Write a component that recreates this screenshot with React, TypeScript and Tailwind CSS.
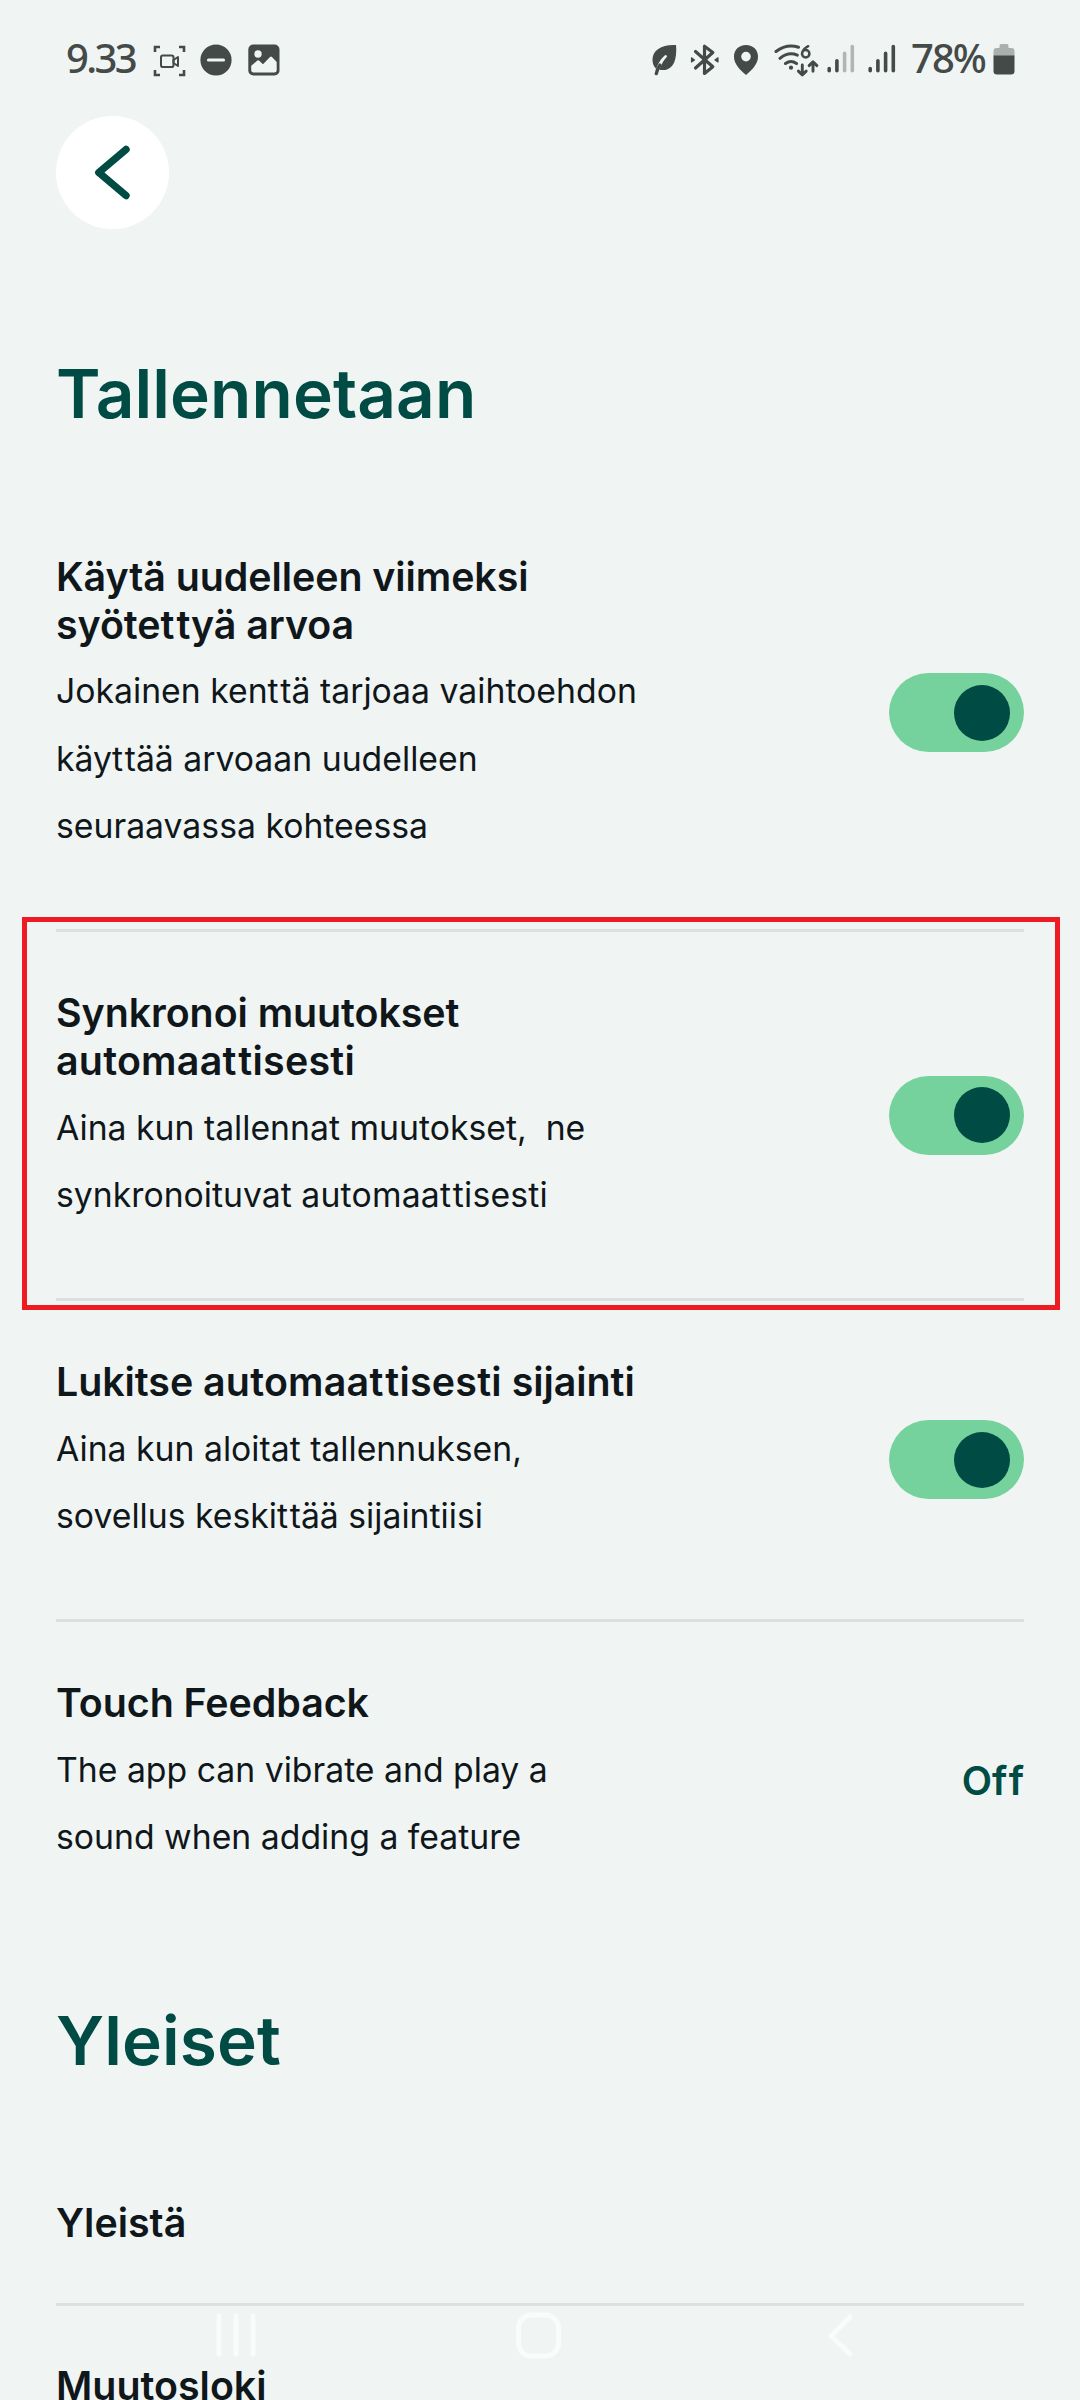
import { Fragment, type ReactNode } from "react";

const INK = "#444a48";

function Signal({ dim }: { dim: boolean }) {
  const faint = dim ? "#b1b6b5" : INK;
  return (
    <svg width="28" height="30" viewBox="0 0 28 30" strokeWidth="3.6" strokeLinecap="round">
      <path d="M2.2 24.5v2.300M9.900 16.700v10.100" stroke={INK} />
      <path d="M17.600 9.200v17.600M25.300 2.600v24.200" stroke={faint} />
    </svg>
  );
}

function StatusBar() {
  return (
    <div className="flex h-[116px] items-start justify-between pt-[44px] font-['Noto_Sans','Open_Sans',sans-serif] text-[40px] leading-[28px] font-medium text-[#444a48]">
      <div className="flex">
        <span className="ml-[66px] w-[87px] tracking-[-2.600px]">9.33</span>
        <svg className="mt-px" width="33" height="32" viewBox="0 0 33 32" fill="none" stroke={INK}>
          <path d="M2 7V2h5M26 2h5v5M31 25v5h-5M7 30H2v-5" strokeWidth="2.600" />
          <rect x="8" y="10.500" width="12.500" height="11.500" rx="1.800" strokeWidth="2" />
          <path d="M20.500 15l4.500-3v9l-4.500-3z" strokeWidth="2" strokeLinejoin="round" />
        </svg>
        <svg className="ml-[14px]" width="32" height="32" viewBox="0 0 32 32">
          <circle cx="16" cy="16" r="15.600" fill={INK} />
          <path d="M8.500 16h15" stroke="#f0f5f4" strokeWidth="3.200" strokeLinecap="round" />
        </svg>
        <svg className="ml-4" width="32" height="32" viewBox="0 0 32 32">
          <rect x="0.300" y="0.500" width="31.200" height="31" rx="5" fill={INK} />
          <circle cx="10" cy="10" r="3.700" fill="#f0f5f4" />
          <path d="M3.200 21.800L9.400 16.600Q10.300 16 11.200 16.800L15 20.200L22 13Q23 12.100 24 13L28.700 18V26.200Q28.700 28.600 26.200 28.600H5.700Q3.200 28.600 3.200 26.200Z" fill="#f0f5f4" />
        </svg>
      </div>
      <div className="flex">
        <svg width="26" height="32" viewBox="0 0 26 32">
          <path d="M25 1C11 0.200 1.500 6 1.500 15.500C1.500 20.500 3.500 23 5.500 25.200Q8 16.500 16.400 11Q11 18.200 8.300 25.800C19 27.800 26.700 20.500 25 1Z" fill={INK} />
          <path d="M14.500 12.500Q8 18 5 30" fill="none" stroke="#f0f5f4" strokeWidth="2.600" strokeLinecap="round" />
          <path d="M9 21Q6 25.500 5.300 29.700" fill="none" stroke={INK} strokeWidth="3.300" strokeLinecap="round" />
        </svg>
        <svg className="ml-[13px]" width="30" height="32" viewBox="0 0 30 32" fill="none" stroke={INK} strokeWidth="3.200" strokeLinejoin="round" strokeLinecap="round">
          <path d="M5.500 7.500L22.800 22.800L14.500 29.400V2.200L22.800 8.500L5.500 24" />
          <path d="M1.500 13.800V18l3-2.100zM28 13.800V18l-3-2.100z" fill={INK} strokeWidth="1.200" />
        </svg>
        <svg className="ml-[13px]" width="26" height="32" viewBox="0 0 26 32">
          <path fillRule="evenodd" d="M13 1C5.800 1 1 6 1 12.800C1 20 7 26 13 31C19 26 25 20 25 12.800C25 6 20.200 1 13 1ZM13 7.800A4.800 4.800 0 1 1 13 17.400A4.800 4.800 0 1 1 13 7.800Z" fill={INK} />
        </svg>
        <svg className="ml-[15px]" width="45" height="34" viewBox="0 0 45 34" fill="none" stroke={INK} strokeWidth="3" strokeLinecap="round" strokeLinejoin="round">
          <path d="M2 7.500Q12.500-0.500 24.500 3.200M6 14.300Q14.500 7.400 23.300 11.200M11.500 19.500Q17 15.500 22.500 19.500" />
          <circle cx="17" cy="23.700" r="2.100" fill={INK} stroke="none" />
          <path d="M34.200 2.200Q28.200 5.500 28 10.200M28 9.800a3.700 3.700 0 1 1 7.400 0a3.700 3.700 0 1 1-7.400 0" strokeWidth="2.500" />
          <path d="M28.300 21v9.700M24.400 27.100l3.900 3.800l3.900-3.800M39 27.300V18.200M35.100 21.600l3.900-3.800l3.900 3.800" strokeWidth="2.900" />
        </svg>
        <div className="ml-[8px] flex gap-[13px]">
          <Signal dim />
          <Signal dim={false} />
        </div>
        <span className="ml-[15px] w-[82px] tracking-[-2px]">78%</span>
        <svg className="mr-[65px]" width="22" height="32" viewBox="0 0 22 32">
          <path d="M6.500 1.500Q6.500 0 8 0h6q1.500 0 1.500 1.500V4h3q3 0 3 3v5H.5V7q0-3 3-3h3z" fill="#abb0af" />
          <path d="M.5 11.500h21V27q0 3.500-3.500 3.500H4Q.5 30.500.5 27z" fill={INK} />
        </svg>
      </div>
    </div>
  );
}

function Toggle() {
  return (
    <div className="flex h-[79px] w-[135px] items-center justify-end rounded-full bg-[#76d29c] pr-[14.500px]">
      <div className="size-[56px] rounded-full bg-[#004b43]" />
    </div>
  );
}

/* Opens up the tight "tt" pairs that Inter draws almost joined. */
function Spaced({ text }: { text: string }) {
  const parts = text.split("tt");
  return (
    <>
      {parts.map((part, i) => (
        <Fragment key={i}>
          {part}
          {i < parts.length - 1 && (
            <>
              <span className="tracking-[0.050em]">t</span>t
            </>
          )}
        </Fragment>
      ))}
    </>
  );
}

/* The longest word in the list is set slightly looser than the rest. */
function Line({ text }: { text: string }) {
  const pieces = text.split(/(automaattisesti)/);
  return (
    <>
      {pieces.map((piece, i) =>
        piece === "automaattisesti" ? (
          <span key={i} className="tracking-[0.006em]">
            <Spaced text={piece} />
          </span>
        ) : (
          <Spaced key={i} text={piece} />
        ),
      )}
    </>
  );
}

type RowProps = { title: string[]; lines: string[]; last?: boolean; children: ReactNode };

function SettingRow({ title, lines, last, children }: RowProps) {
  return (
    <section
      className={
        "flex items-center justify-between pt-[57px] pb-[56.900px] " +
        (last ? "" : "border-b-[3px] border-[#dce0df]")
      }
    >
      <div className="pb-[12.500px] whitespace-pre">
        <h2 className="text-[39.375px] leading-[47.650px] font-semibold tracking-[-0.060px]">
          {title.map((t) => (
            <div key={t}>
              <Line text={t} />
            </div>
          ))}
        </h2>
        <p className="mt-[9px] text-[33.750px] leading-[67.500px]">
          {lines.map((l) => (
            <span key={l} className="block">
              <Line text={l} />
            </span>
          ))}
        </p>
      </div>
      {children}
    </section>
  );
}

function NavBar() {
  return (
    <svg className="absolute top-[2305px] left-0" width="1080" height="60" viewBox="0 0 1080 60" fill="none" stroke="#f9fcfb" strokeWidth="5" strokeLinecap="round" strokeLinejoin="round">
      <path d="M219 11v38M236 11v38M253 11v38" />
      <rect x="518.500" y="10" width="40" height="41" rx="13" />
      <path d="M850 12L831 31L850 49" />
    </svg>
  );
}

export default function App() {
  return (
    <div className="relative h-[2400px] w-[1080px] overflow-hidden bg-[#f0f5f4] font-['Inter',sans-serif] text-[#10171b] [font-feature-settings:'liga'_0,'calt'_0]">
      <StatusBar />
      <main className="mx-[56px]">
        <button className="flex size-[113px] items-center justify-center rounded-full bg-white">
          <svg width="40" height="60" viewBox="0 0 40 60" fill="none" stroke="#004b43" strokeWidth="7.400" strokeLinecap="round" strokeLinejoin="round">
            <path d="M33 6.500L5.800 29.500L33 52.500" />
          </svg>
        </button>
        <h1 className="mt-[124px] text-[67.500px] leading-[82px] font-semibold tracking-[0.100px] text-[#004b43]">Tallennetaan</h1>
        <div className="mt-[61px]">
          <SettingRow
            title={["Käytä uudelleen viimeksi", "syötettyä arvoa"]}
            lines={["Jokainen kenttä tarjoaa vaihtoehdon", "käyttää arvoaan uudelleen", "seuraavassa kohteessa"]}
          >
            <Toggle />
          </SettingRow>
          <SettingRow
            title={["Synkronoi muutokset", "automaattisesti"]}
            lines={["Aina kun tallennat muutokset,  ne", "synkronoituvat automaattisesti"]}
          >
            <Toggle />
          </SettingRow>
          <SettingRow
            title={["Lukitse automaattisesti sijainti"]}
            lines={["Aina kun aloitat tallennuksen,", "sovellus keskittää sijaintiisi"]}
          >
            <Toggle />
          </SettingRow>
          <SettingRow
            title={["Touch Feedback"]}
            lines={["The app can vibrate and play a", "sound when adding a feature"]}
            last
          >
            <span className="text-[39.375px] leading-[48px] font-semibold text-[#004b43]">
              O<span className="tracking-[1.500px]">f</span>f
            </span>
          </SettingRow>
        </div>
        <h1 className="mt-[60px] text-[67.500px] leading-[82px] font-semibold tracking-[0.100px] text-[#004b43]">Yleiset</h1>
        <h2 className="mt-[117px] border-b-[3px] border-[#dce0df] pb-[56px] text-[39.375px] leading-[48px] font-semibold">Yleistä</h2>
        <h2 className="mt-[56px] text-[39.375px] leading-[48px] font-semibold">Muutosloki</h2>
      </main>
      <div className="absolute top-[917px] left-[22px] h-[393px] w-[1038px] border-[5px] border-[#ef1b23]" />
      <NavBar />
    </div>
  );
}
